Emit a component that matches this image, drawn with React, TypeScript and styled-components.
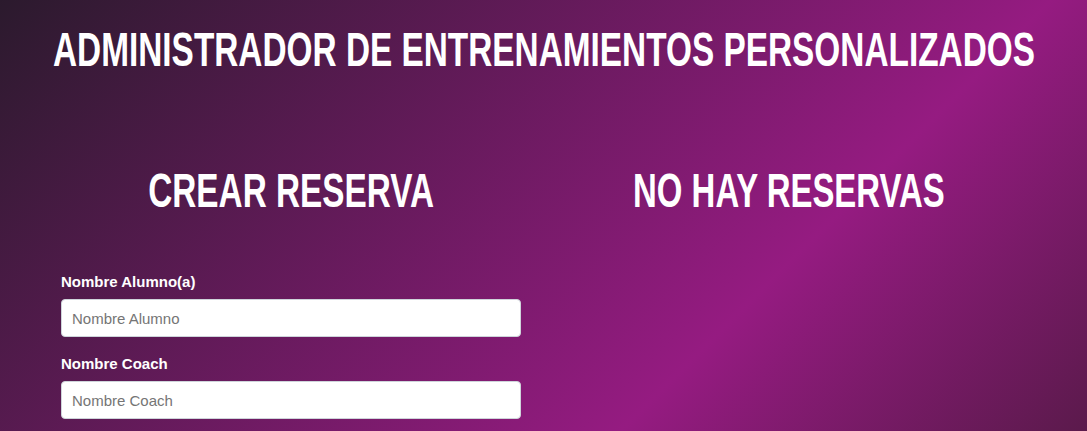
import React from "react";
import styled, { createGlobalStyle } from "styled-components";

const GlobalStyle = createGlobalStyle`
  html, body {
    margin: 0;
    padding: 0;
  }
  * { box-sizing: border-box; }
`;

const Page = styled.div`
  min-height: 100vh;
  overflow: hidden;
  background: linear-gradient(135deg, #2b1a2d 0%, #951b81 69%, #5a1a4b 100%);
  font-family: "Liberation Sans", Arial, sans-serif;
  color: #fff;
  padding-top: 25px;
`;

const Heading = styled.h1`
  margin: 0;
  display: flex;
  justify-content: center;
  font-family: "Liberation Sans", Arial, sans-serif;
  font-weight: 700;
  font-size: 49px;
  line-height: 49px;
  color: #fff;
  text-transform: uppercase;
`;

const Squeeze = styled.span<{ $k: number }>`
  display: block;
  flex: none;
  white-space: nowrap;
  transform: scaleX(${(p) => p.$k});
  transform-origin: center;
`;

const Columns = styled.div`
  display: flex;
  gap: 20px;
  padding: 0 50px 0 61px;
  margin-top: 92px;
`;

const LeftCol = styled.section`
  width: 460px;
  flex: none;
`;

const RightCol = styled.section`
  flex: 1;
`;

const SubHeading = styled(Heading).attrs({ as: "h2" })``;

const Form = styled.form`
  margin-top: 58px;
`;

const Field = styled.div`
  margin-bottom: 18px;
`;

const Label = styled.label`
  display: block;
  font-size: 15px;
  font-weight: 700;
  margin-bottom: 9px;
  color: #fff;
`;

const Input = styled.input`
  display: block;
  width: 100%;
  height: 38px;
  padding: 0 10px;
  border: 1px solid #ced4da;
  border-radius: 4px;
  background: #fff;
  font-family: "Liberation Sans", Arial, sans-serif;
  font-size: 15px;
  color: #333;
  outline: none;
  &::placeholder {
    color: #757575;
  }
`;

export default function App() {
  return (
    <>
      <GlobalStyle />
      <Page>
        <Heading>
          <Squeeze $k={0.681}>Administrador de Entrenamientos Personalizados</Squeeze>
        </Heading>
        <Columns>
          <LeftCol>
            <SubHeading>
              <Squeeze $k={0.68}>Crear Reserva</Squeeze>
            </SubHeading>
            <Form>
              <Field>
                <Label htmlFor="alumno">Nombre Alumno(a)</Label>
                <Input id="alumno" type="text" placeholder="Nombre Alumno" />
              </Field>
              <Field>
                <Label htmlFor="coach">Nombre Coach</Label>
                <Input id="coach" type="text" placeholder="Nombre Coach" />
              </Field>
            </Form>
          </LeftCol>
          <RightCol>
            <SubHeading>
              <Squeeze $k={0.672}>No hay reservas</Squeeze>
            </SubHeading>
          </RightCol>
        </Columns>
      </Page>
    </>
  );
}
